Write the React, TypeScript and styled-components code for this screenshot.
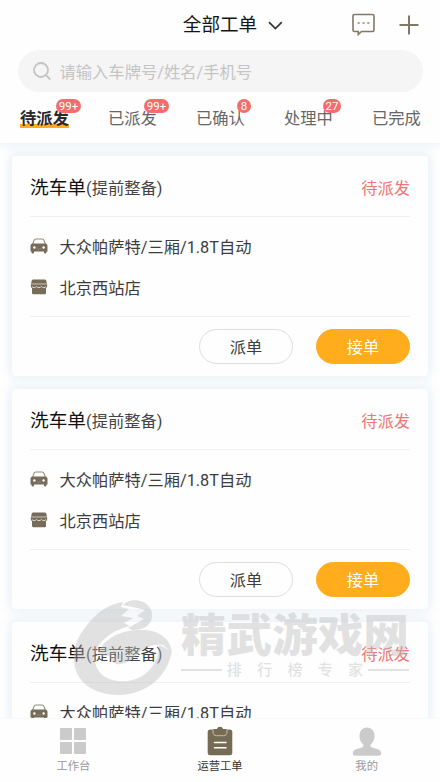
import React from 'react';
import styled, { createGlobalStyle } from 'styled-components';

const GlobalStyle = createGlobalStyle`
  * { box-sizing: border-box; }
  html, body { margin: 0; padding: 0; }
  body {
    background: #fff;
    color: #333;
    font-family: Roboto, "Noto Sans CJK SC", sans-serif;
    overflow: hidden;
  }
  button { font-family: inherit; padding: 0; background: none; border: 0; }
`;

const Screen = styled.div`
  position: relative;
  width: 440px;
  height: 782px;
  display: flex;
  flex-direction: column;
  overflow: hidden;
  background: #fefefe;
`;

const Header = styled.header`
  position: relative;
  z-index: 1;
  flex: none;
  height: 143px;
  background: #fefefe;
  box-shadow: 0 2px 10px #e6eff5;
`;

const TitleBar = styled.div`
  height: 50px;
  display: grid;
  grid-template-columns: 1fr auto 1fr;
  align-items: center;
  padding: 0 21px 0 47px;
`;

const Title = styled.button`
  grid-column: 2;
  display: flex;
  align-items: center;
  gap: 11px;
  font-size: 18.6px;
  line-height: 26px;
  color: #151515;
  white-space: nowrap;
`;

const Actions = styled.div`
  display: flex;
  justify-content: flex-end;
  align-items: center;
  gap: 24px;
  padding-bottom: 1px;
`;

const Search = styled.div`
  height: 42px;
  margin: 0 17px 0 18px;
  padding-left: 14px;
  display: flex;
  align-items: center;
  gap: 7.5px;
  border-radius: 21px;
  background: #f5f5f5;
  color: #c4c4c4;
  font-size: 16.3px;
`;

const Tabs = styled.nav`
  display: flex;
  gap: 39px;
  padding: 14px 0 0 20px;
`;

const Tab = styled.div<{ $active?: boolean }>`
  position: relative;
  width: 49px;
  height: 23px;
  flex: none;
  font-size: 16.3px;
  line-height: 25px;
  white-space: nowrap;
  font-weight: ${p => (p.$active ? 700 : 400)};
  color: ${p => (p.$active ? '#292929' : '#666')};
  background: ${p => (p.$active ? 'linear-gradient(#ffae1b, #ffae1b) 0 18px / 49px 4px no-repeat' : 'none')};
`;

const Badge = styled.span<{ $size: number }>`
  position: absolute;
  top: -7px;
  left: ${p => (p.$size > 20 ? 36 : p.$size > 15 ? 39 : 41)}px;
  width: ${p => p.$size}px;
  height: 14px;
  border-radius: 7px;
  background: #f56c6c;
  color: #fff;
  font-size: 11.5px;
  font-weight: 400;
  line-height: 14px;
  text-align: center;
`;

const List = styled.main`
  flex: 1;
  min-height: 0;
  overflow: hidden;
  display: flex;
  flex-direction: column;
  gap: 13px;
  padding: 13px 12px 0;
`;

const Card = styled.article`
  flex: none;
  height: 220px;
  padding: 0 18px;
  border-radius: 4px;
  background: #fefefe;
  box-shadow: 0 0 12px 2px #e6eff5;
`;

const CardHead = styled.div`
  height: 61px;
  display: flex;
  align-items: center;
  justify-content: space-between;
  border-bottom: 1px solid #f0f0f0;
  padding-top: 3px;
`;

const Kind = styled.div`
  padding-top: 1px;
  font-size: 18.7px;
  line-height: 27px;
  color: #111;
`;

const Detail = styled.span`
  font-size: 16.3px;
  color: #444;
`;

const Status = styled.span`
  font-size: 16.3px;
  line-height: 24px;
  padding-top: 2px;
  color: #f17575;
`;

const CardBody = styled.div`
  height: 100px;
  padding-top: 10px;
  border-bottom: 1px solid #f0f0f0;
`;

const Info = styled.div`
  height: 40.5px;
  display: flex;
  align-items: center;
  gap: 11.5px;
  font-size: 16.25px;
  color: #3d3d3d;
  svg { flex: none; margin-top: -2px; }
`;

const InfoText = styled.span`
  line-height: 24px;
  padding-top: 2px;
`;

const ButtonRow = styled.div`
  display: flex;
  justify-content: flex-end;
  gap: 23px;
  padding-top: 12px;
`;

const Pill = styled.button<{ $primary?: boolean }>`
  width: 94px;
  height: 35px;
  border-radius: 18px;
  font-size: 16.2px;
  line-height: 35px;
  border: 1px solid ${p => (p.$primary ? '#ffac1d' : '#dddde3')};
  background: ${p => (p.$primary ? '#ffac1d' : '#fefefe')};
  color: ${p => (p.$primary ? '#fff' : '#3d3d3d')};
`;

const BottomNav = styled.nav`
  position: relative;
  z-index: 3;
  flex: none;
  height: 64px;
  display: grid;
  grid-template-columns: repeat(3, 1fr);
  background: #fefefe;
  border-top: 1px solid #fafafa;
`;

const NavItem = styled.div<{ $active?: boolean }>`
  display: flex;
  flex-direction: column;
  align-items: center;
  gap: 3px;
  padding-top: 7px;
  font-size: 11.3px;
  line-height: 16px;
  color: ${p => (p.$active ? '#333' : '#999')};
`;

const Watermark = styled.div`
  position: absolute;
  z-index: 2;
  left: 73px;
  top: 598px;
  display: flex;
  gap: 8px;
  color: #bdbdbd;
  opacity: 0.43;
  pointer-events: none;
`;

const MarkText = styled.div`
  width: 228px;
  padding-top: 16px;
`;

const MarkName = styled.div`
  font-size: 45.6px;
  line-height: 46px;
  font-weight: 900;
  white-space: nowrap;
`;

const MarkSub = styled.div`
  display: grid;
  grid-template-columns: 41px auto 41px;
  justify-content: space-between;
  align-items: center;
  margin-top: 1px;
  font-size: 15px;
  line-height: 18px;
  font-weight: 500;
  &::before, &::after { content: ''; height: 2px; background: currentColor; }
`;

const MarkWords = styled.span`
  display: flex;
  gap: 15.3px;
`;

const Chevron = () => (
  <svg width="15" height="9" viewBox="0 0 15 9" fill="none" stroke="#333" strokeWidth="1.7">
    <path d="M1 1.2 7.4 7.5 13.8 1.2" />
  </svg>
);

const MessageIcon = () => (
  <svg width="23" height="23" viewBox="0 0 23 23" fill="none" stroke="#827866" strokeWidth="1.6">
    <path d="M2.5 1.5h18A1.5 1.5 0 0 1 22 3v14a1.5 1.5 0 0 1-1.5 1.5h-11l-3.200 3v-3H2.500A1.500 1.500 0 0 1 1 17V3a1.500 1.500 0 0 1 1.500-1.500Z" />
    <path d="M5.700 10h2M10.500 10h2M15.300 10h2" strokeWidth="1.800" stroke="#aaa294" />
  </svg>
);

const PlusIcon = () => (
  <svg width="20" height="20" viewBox="0 0 20 20" fill="none" stroke="#827866" strokeWidth="2">
    <path d="M10 .5v19M.5 10h19" />
  </svg>
);

const SearchIcon = () => (
  <svg width="20" height="20" viewBox="0 0 20 20" fill="none" stroke="#c4c4c4" strokeWidth="1.8">
    <circle cx="9" cy="9" r="7" />
    <path d="m14 14.2 3.7 3.8" strokeLinecap="round" />
  </svg>
);

const CarIcon = () => (
  <svg width="18" height="16" viewBox="0 0 18 16">
    <path d="M2.600 6.500 3.900 2.600C4.200 1.500 4.900 1 6 1h6c1.100 0 1.800.5 2.100 1.600l1.300 3.900" fill="none" stroke="#938b78" strokeWidth="1.100" />
    <path d="M2.800 5.600h12.400c1.500 0 2.300 1 2.300 2.300v5.700h-1v.6a1.200 1.200 0 0 1-2.600 0v-.6H4.100v.6a1.200 1.200 0 0 1-2.600 0v-.6h-1V7.900c0-1.300.8-2.300 2.300-2.300Z" fill="#766c59" />
    <circle cx="4.400" cy="9.500" r="1.200" fill="#fff" />
    <circle cx="13.600" cy="9.500" r="1.200" fill="#fff" />
    <path d="M7 11h4" stroke="#8d8474" />
  </svg>
);

const ShopIcon = () => (
  <svg width="18" height="16" viewBox="0 0 18 16">
    <path d="M3.200.6h11.600c.7 0 1.200.4 1.400 1l.8 3.100H1l.8-3.100c.2-.6.700-1 1.400-1Z" fill="#766c59" />
    <path d="M.8 5.200h16.400v1.600c0 1.300-.5 2-1.200 2.300V14c0 .8-.5 1.200-1.200 1.200H3.200C2.500 15.200 2 14.800 2 14V9.100C1.300 8.800.8 8.100.8 6.800Z" fill="#766c59" />
    <path d="M1.500 4.900h15" stroke="#b5aea2" strokeWidth=".6" />
    <path d="M1.900 7.500c1.300 1.500 3.300 1.500 4.700 0 1.300 1.500 3.500 1.500 4.800 0 1.400 1.500 3.400 1.500 4.700 0" fill="none" stroke="#e7e4df" strokeWidth=".9" />
  </svg>
);

const GridIcon = () => (
  <svg width="28" height="30" viewBox="0 0 28 30" fill="#cbcbcb">
    <rect x="1" y="2" width="12" height="12" rx=".7" />
    <rect x="15" y="2" width="12" height="12" rx=".7" />
    <rect x="1" y="16" width="12" height="12" rx=".7" />
    <rect x="15" y="16" width="12" height="12" rx=".7" />
  </svg>
);

const ClipboardIcon = () => (
  <svg width="28" height="30" viewBox="0 0 28 30">
    <rect x="1.700" y="3.500" width="24.600" height="25.700" rx="2.500" fill="#766c55" />
    <path d="M7 3h4c.4-1.600 1.500-2.300 3-2.300S16.600 1.400 17 3h4v3c0 2.300-1.300 3.700-3.500 3.700h-7C8.300 9.700 7 8.300 7 6Z" fill="#766c55" />
    <path d="M7 3v3c0 2.300 1.300 3.700 3.500 3.700h7C19.700 9.700 21 8.300 21 6V3" fill="none" stroke="#c9c3b5" strokeWidth=".9" />
    <path d="M8.500 16.500h11.500M8.500 21.700h11.500" stroke="#fff" strokeWidth="1.600" strokeLinecap="round" />
  </svg>
);

const PersonIcon = () => (
  <svg width="30" height="30" viewBox="0 0 30 30" fill="#cbcbcb">
    <path d="M15 1.500c4.800 0 7.500 3.900 7.500 8.700 0 3.900-1.500 6.300-3.900 8.300v2.300c2.800 1.600 6.400 1.700 8.800 3.200 1.400.9 2 2.400 1.700 4.100-.2 1-1 1.600-2.200 1.600H3.100c-1.200 0-2-.6-2.200-1.600-.3-1.700.3-3.200 1.700-4.100 2.400-1.500 6-1.600 8.800-3.200v-2.300c-2.400-2-3.900-4.400-3.900-8.300 0-4.800 2.700-8.700 7.500-8.700Z" />
  </svg>
);

const MarkLogo = () => (
  <svg width="100" height="100" viewBox="0 0 100 100" fill="currentColor">
    <path d="M50 4C36 6 24 14 14 27 5 38 0 49 1 62c1 23 21 35 45 35 27-1 48-17 53-44l-13-6c0 17-11 33-31 36-17 2-31-5-33-20C20 47 36 33 57 28l-6-3 9-5-12-2 8-7-8-2 2-5Z" />
    <path d="M50 7C54 2 63 1 70 4c9 4 12 15 6 22-4 5-10 6-17 6l-4-2 16-9-7-3 8-6-8-2-14-3Z" />
    <path d="M25 56C29 43 44 33 64 32c19-1 33 6 35 22l-9-7c-6-1-13 0-19 4-7 4-11 13-23 15-7 1-9-2-11-7 5 0 11-3 14-7-8 5-18 8-26 4Z" />
  </svg>
);

const tabs = [
  { label: '待派发', count: '99+', size: 25, active: true },
  { label: '已派发', count: '99+', size: 25 },
  { label: '已确认', count: '8', size: 14 },
  { label: '处理中', count: '27', size: 18 },
  { label: '已完成' },
];

const orders = [1, 2, 3];

const OrderCard = () => (
  <Card>
    <CardHead>
      <Kind>洗车单<Detail>(提前整备)</Detail></Kind>
      <Status>待派发</Status>
    </CardHead>
    <CardBody>
      <Info><CarIcon /><InfoText>大众帕萨特/三厢/1.8T自动</InfoText></Info>
      <Info><ShopIcon /><InfoText>北京西站店</InfoText></Info>
    </CardBody>
    <ButtonRow>
      <Pill>派单</Pill>
      <Pill $primary>接单</Pill>
    </ButtonRow>
  </Card>
);

export default function App() {
  return (
    <>
      <GlobalStyle />
      <Screen>
        <Header>
          <TitleBar>
            <Title>全部工单<Chevron /></Title>
            <Actions><MessageIcon /><PlusIcon /></Actions>
          </TitleBar>
          <Search><SearchIcon />请输入车牌号/姓名/手机号</Search>
          <Tabs>
            {tabs.map(t => (
              <Tab key={t.label} $active={t.active}>
                {t.label}
                {t.count && <Badge $size={t.size}>{t.count}</Badge>}
              </Tab>
            ))}
          </Tabs>
        </Header>
        <List>
          {orders.map(id => <OrderCard key={id} />)}
        </List>
        <Watermark>
          <MarkLogo />
          <MarkText>
            <MarkName>精武游戏网</MarkName>
            <MarkSub>
              <MarkWords>{Array.from('排行榜专家').map(c => <span key={c}>{c}</span>)}</MarkWords>
            </MarkSub>
          </MarkText>
        </Watermark>
        <BottomNav>
          <NavItem><GridIcon />工作台</NavItem>
          <NavItem $active><ClipboardIcon />运营工单</NavItem>
          <NavItem><PersonIcon />我的</NavItem>
        </BottomNav>
      </Screen>
    </>
  );
}
